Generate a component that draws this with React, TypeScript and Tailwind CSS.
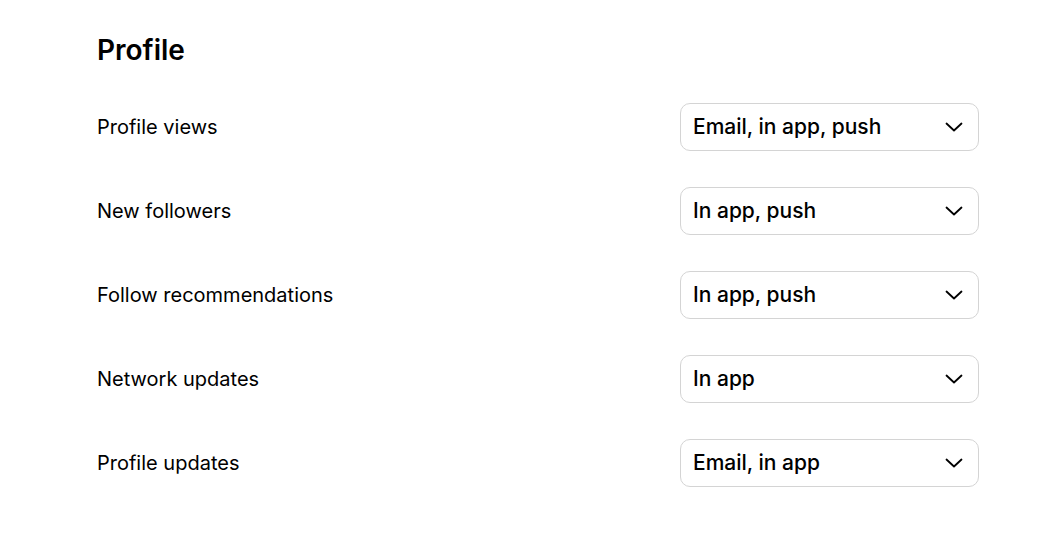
const rows = [
  { label: 'Profile views', value: 'Email, in app, push' },
  { label: 'New followers', value: 'In app, push' },
  { label: 'Follow recommendations', value: 'In app, push' },
  { label: 'Network updates', value: 'In app' },
  { label: 'Profile updates', value: 'Email, in app' },
];

function Chevron() {
  return (
    <svg width="18" height="10" viewBox="0 0 18 10" fill="none" className="text-black">
      <polyline points="1.5,1.5 9,8.5 16.5,1.5" stroke="currentColor" strokeWidth="1.8" strokeLinecap="round" strokeLinejoin="round" />
    </svg>
  );
}

export default function App() {
  return (
    <div className="min-h-screen bg-white font-['Inter',sans-serif] text-black">
      <div className="pl-[97px] pt-[34px] w-[979px]">
        <h1 className="text-[28px] leading-[32px] font-semibold mb-[37px]">Profile</h1>
        <div className="flex flex-col gap-[36px]">
          {rows.map((row) => (
            <div key={row.label} className="flex items-center justify-between">
              <span className="text-[20px]">{row.label}</span>
              <button className="flex items-center justify-between w-[299px] h-[48px] pl-[12px] pr-[15px] border border-[#d4d4d4] rounded-[10px] bg-white">
                <span className="text-[21px] font-medium">{row.value}</span>
                <Chevron />
              </button>
            </div>
          ))}
        </div>
      </div>
    </div>
  );
}
